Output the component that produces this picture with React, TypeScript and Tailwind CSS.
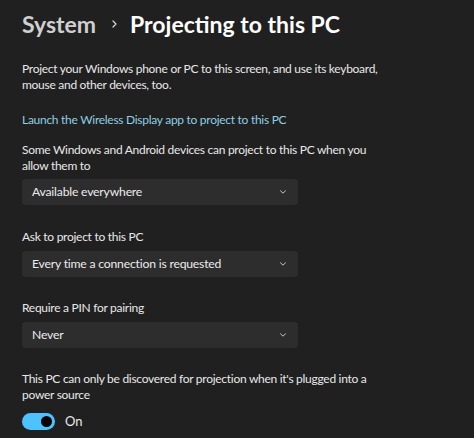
import React from "react";

function Chevron() {
  return (
    <svg width="10" height="10" viewBox="0 0 10 10" fill="none">
      <path d="M2.5 3.8 L5 6.2 L7.5 3.8" stroke="#c8c8c8" strokeWidth="1" strokeLinecap="round" strokeLinejoin="round" />
    </svg>
  );
}

function Select({ value }: { value: string }) {
  return (
    <div className="mt-[6px] flex h-[26px] w-[276px] items-center justify-between rounded-[4px] bg-[#2d2d2d] pl-[10px] pr-[10px] text-[12.2px] tracking-[-0.2px] text-[#ececec]">
      <span>{value}</span>
      <Chevron />
    </div>
  );
}

const body = "text-[12px] leading-[16px] tracking-[-0.28px] text-[#e8e8e8]";

export default function App() {
  return (
    <div
      className="h-[438px] w-[474px] overflow-hidden bg-[#202020] text-white"
      style={{ fontFamily: 'Lato, "Noto Sans", sans-serif' }}
    >
      <div className="px-[22px] pt-[8px]">
        <div className="flex items-center text-[23px] font-bold leading-[32px]">
          <span className="text-[#cfcfcf]">System</span>
          <svg className="ml-[14px] mr-[11px]" width="9" height="10" viewBox="0 0 9 10" fill="none">
            <path d="M3 2 L6 5 L3 8" stroke="#d8d8d8" strokeWidth="1.2" strokeLinecap="round" strokeLinejoin="round" />
          </svg>
          <span className="text-white">Projecting to this PC</span>
        </div>

        <p className={`mt-[21px] ${body}`}>
          Project your Windows phone or PC to this screen, and use its keyboard,
          <br />
          mouse and other devices, too.
        </p>

        <p className="mt-[19px] text-[12px] leading-[16px] tracking-[-0.28px] text-[#8fcfe0]">
          Launch the Wireless Display app to project to this PC
        </p>

        <p className={`mt-[14px] ${body}`}>
          Some Windows and Android devices can project to this PC when you
          <br />
          allow them to
        </p>
        <div className="mt-[-1px]">
          <Select value="Available everywhere" />
        </div>

        <p className={`mt-[24px] ${body}`}>Ask to project to this PC</p>
        <Select value="Every time a connection is requested" />

        <p className={`mt-[23px] ${body}`}>Require a PIN for pairing</p>
        <Select value="Never" />

        <p className={`mt-[23px] ${body}`}>
          This PC can only be discovered for projection when it's plugged into a
          <br />
          power source
        </p>

        <div className="mt-[9px] flex items-center gap-[10px]">
          <div className="flex h-[17px] w-[33px] items-center justify-end rounded-full bg-[#4cc2ff] pr-[3px]">
            <div className="h-[11px] w-[11px] rounded-full bg-black" />
          </div>
          <span className="text-[13px] text-[#e8e8e8]">On</span>
        </div>
      </div>
    </div>
  );
}
